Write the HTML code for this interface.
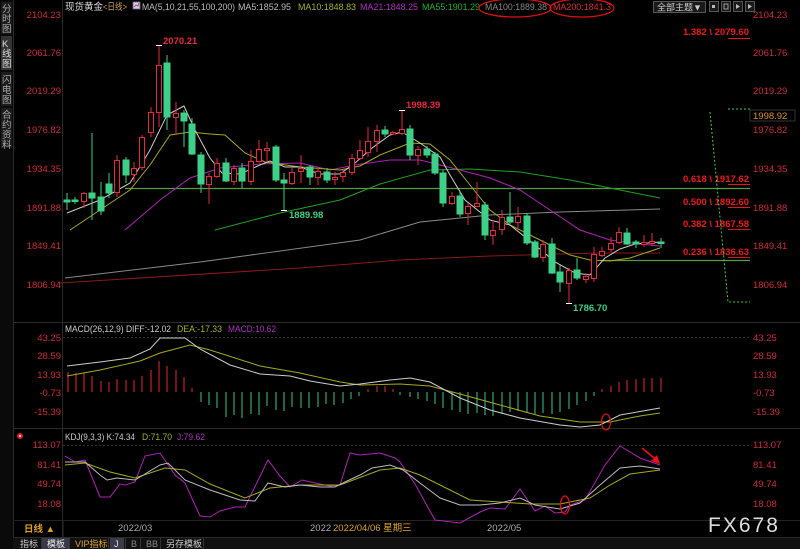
<!DOCTYPE html>
<html><head><meta charset="utf-8"><style>
html,body{margin:0;padding:0;background:#000;width:800px;height:549px;overflow:hidden}
svg{display:block}
text{font-family:"Liberation Sans","Noto Sans CJK SC",sans-serif;font-size:9.5px}
</style></head><body>
<svg width="800" height="549" viewBox="0 0 800 549" xmlns="http://www.w3.org/2000/svg">
<rect width="800" height="549" fill="#000"/>
<!-- sidebar -->
<rect x="0" y="0" width="13" height="549" fill="#0a0a0a"/>
<rect x="1" y="2" width="11" height="32" fill="#1c1c1c"/>
<rect x="1" y="36" width="11" height="34" fill="#333"/>
<rect x="1" y="72" width="11" height="34" fill="#1c1c1c"/>
<rect x="1" y="108" width="11" height="40" fill="#1c1c1c"/>
<g fill="#aaa">
<text x="2" y="12">分</text><text x="2" y="22">时</text><text x="2" y="32">图</text>
<text x="2" y="47" fill="#ddd">K</text><text x="2" y="57" fill="#ddd">线</text><text x="2" y="67" fill="#ddd">图</text>
<text x="2" y="83">闪</text><text x="2" y="93">电</text><text x="2" y="103">图</text>
<text x="2" y="118">合</text><text x="2" y="128">约</text><text x="2" y="138">资</text><text x="2" y="148">料</text>
</g>
<line x1="13.5" y1="0" x2="13.5" y2="549" stroke="#2a2a2a"/>
<line x1="62.5" y1="0" x2="62.5" y2="538" stroke="#2a2a2a"/>
<line x1="13" y1="322.5" x2="800" y2="322.5" stroke="#2a2a2a"/>
<line x1="13" y1="428.5" x2="800" y2="428.5" stroke="#2a2a2a"/>
<line x1="13" y1="520.5" x2="800" y2="520.5" stroke="#222"/>
<line x1="13" y1="537.5" x2="800" y2="537.5" stroke="#2a2a2a"/>
<line x1="63" y1="337.5" x2="750" y2="337.5" stroke="#333" stroke-dasharray="2,2"/>
<line x1="63" y1="445.5" x2="750" y2="445.5" stroke="#333" stroke-dasharray="2,2"/>

<!-- header -->
<text x="65" y="10" fill="#ddd" textLength="38" lengthAdjust="spacingAndGlyphs">现货黄金</text><text x="103" y="10" fill="#d0a050" textLength="24" lengthAdjust="spacingAndGlyphs">&lt;日线&gt;</text>
<rect x="133" y="2" width="7" height="7" fill="#ccd" stroke="#66a" stroke-width="0.8"/><polyline points="134,7 136,5 138,6 139,3" fill="none" stroke="#c33" stroke-width="0.8"/>
<text x="142" y="10" fill="#bbb" textLength="93" lengthAdjust="spacingAndGlyphs">MA(5,10,21,55,100,200)</text>
<text x="238" y="10" fill="#bbb" textLength="53" lengthAdjust="spacingAndGlyphs">MA5:1852.95</text>
<text x="298" y="10" fill="#a8b020" textLength="58" lengthAdjust="spacingAndGlyphs">MA10:1848.83</text>
<text x="360" y="10" fill="#b030c0" textLength="58" lengthAdjust="spacingAndGlyphs">MA21:1848.25</text>
<text x="422" y="10" fill="#20b030" textLength="58" lengthAdjust="spacingAndGlyphs">MA55:1901.29</text>
<text x="485" y="10" fill="#888" textLength="62" lengthAdjust="spacingAndGlyphs">MA100:1889.38</text>
<text x="553" y="10" fill="#d83030" textLength="58" lengthAdjust="spacingAndGlyphs">MA200:1841.3</text>
<ellipse cx="515" cy="8" rx="36" ry="9" fill="none" stroke="#e01010" stroke-width="1.2"/>
<ellipse cx="582" cy="8" rx="32" ry="9" fill="none" stroke="#e01010" stroke-width="1.2"/>
<rect x="653.5" y="1.5" width="52" height="11" fill="#1a1a1a" stroke="#555"/>
<text x="657" y="10.5" fill="#ccc" style="font-size:9px">全部主题▼</text>
<rect x="709.5" y="1.5" width="9" height="10" fill="#1a1a1a" stroke="#555"/>
<rect x="721.5" y="1.5" width="9" height="10" fill="#1a1a1a" stroke="#555"/>
<rect x="733.5" y="1.5" width="9" height="10" fill="#1a1a1a" stroke="#555"/>
<rect x="745.5" y="1.5" width="9" height="10" fill="#1a1a1a" stroke="#555"/>
<g fill="#bbb"><rect x="712" y="5" width="3" height="3"/><rect x="724" y="4" width="4" height="5" fill="none" stroke="#bbb" stroke-width="0.8"/><polygon points="736,4 740,6.5 736,9"/><polygon points="748,4 752,6.5 748,9"/></g>

<g fill="#d02a3a" text-anchor="end">
<text x="61" y="18">2104.23</text><text x="61" y="56">2061.76</text><text x="61" y="94">2019.29</text><text x="61" y="133">1976.82</text>
<text x="61" y="172">1934.35</text><text x="61" y="211">1891.88</text><text x="61" y="249">1849.41</text><text x="61" y="288">1806.94</text>
</g>
<g fill="#d02a3a">
<text x="753" y="18">2104.23</text><text x="753" y="56">2061.76</text><text x="753" y="94">2019.29</text><text x="753" y="133">1976.82</text>
<text x="753" y="172">1934.35</text><text x="753" y="211">1891.88</text><text x="753" y="249">1849.41</text><text x="753" y="288">1806.94</text>
</g>
<rect x="750" y="110" width="45" height="11" fill="#000" stroke="#333"/>
<text x="753" y="119" fill="#e09020">1998.92</text>

<g fill="#f01818" text-anchor="end">
<text x="749" y="35" style="font-weight:bold">1.382 \ 2079.60</text>
<text x="749" y="182" style="font-weight:bold">0.618 \ 1917.62</text>
<text x="749" y="205" style="font-weight:bold">0.500 \ 1892.60</text>
<text x="749" y="227" style="font-weight:bold">0.382 \ 1867.58</text>
<text x="749" y="255" style="font-weight:bold">0.236 \ 1836.63</text>
</g>
<g stroke="#e01818"><line x1="728" y1="38.5" x2="750" y2="38.5"/><line x1="728" y1="184.5" x2="750" y2="184.5"/><line x1="728" y1="207.5" x2="750" y2="207.5"/><line x1="728" y1="229.5" x2="750" y2="229.5"/><line x1="728" y1="257.5" x2="750" y2="257.5"/></g>
<line x1="125" y1="188.5" x2="750" y2="188.5" stroke="#5a9a40" stroke-width="1.2"/>
<line x1="600" y1="260.5" x2="750" y2="260.5" stroke="#5a9a40" stroke-width="1.2"/>
<polyline points="728,109 750,109" stroke="#40d040" stroke-dasharray="2,2" fill="none"/>
<polyline points="710,112 728,302 750,302" stroke="#40d040" stroke-dasharray="2,2" fill="none"/>

<g fill="none" stroke-width="1">
<polyline stroke="#8a1818" points="60,283 300,268 400,260 490,256 560,254 600,253 660,253"/>
<polyline stroke="#888" points="65,278 200,262 360,240 420,222 490,215 560,212 660,209"/>
<polyline stroke="#20a020" points="215,230 280,213 340,200 380,184 430,170 470,169 520,172 570,180 620,190 660,198"/>
<polyline stroke="#b020b8" points="125,230 160,200 190,178 220,168 260,164 300,163 330,170 355,165 390,160 420,160 460,170 490,178 520,190 550,210 580,230 610,240 640,244 660,246"/>
<polyline stroke="#a8a818" points="70,230 100,210 130,190 150,165 170,135 190,132 210,134 225,135 245,153 265,162 300,167 340,170 360,166 380,155 410,143 430,144 450,160 470,185 490,210 510,225 540,240 570,255 590,260 610,261 630,258 660,248"/>
<polyline stroke="#ccc" points="67,213 100,200 130,183 150,150 167,115 184,106 195,130 210,158 222,173 240,174 260,165 270,161 285,167 300,167 320,174 340,174 355,163 372,148 390,135 402,132 420,143 440,157 450,175 465,200 490,220 510,225 535,245 555,262 575,273 590,275 605,258 620,249 635,244 660,242"/>
</g>

<g stroke-width="1">
<g stroke="#3ecf88" fill="#3ecf88">
<line x1="67" y1="193" x2="67" y2="210"/><rect x="64" y="200" width="6" height="2"/>
<line x1="75" y1="197" x2="75" y2="204"/><rect x="72" y="200" width="6" height="1.5"/>
<line x1="92" y1="133" x2="92" y2="220"/><rect x="89" y="193" width="6" height="5"/>
<line x1="101" y1="182" x2="101" y2="215"/><rect x="98" y="197" width="6" height="14"/>
<line x1="109" y1="173" x2="109" y2="198"/><rect x="106" y="184" width="6" height="9"/>
<line x1="126" y1="157" x2="126" y2="183"/><rect x="123" y="160" width="6" height="15"/>
<line x1="167" y1="55" x2="167" y2="130"/><rect x="164" y="63" width="6" height="54"/>
<line x1="184" y1="110" x2="184" y2="147"/><rect x="181" y="113" width="6" height="8"/>
<line x1="192" y1="118" x2="192" y2="155"/><rect x="189" y="124" width="6" height="30"/>
<line x1="201" y1="152" x2="201" y2="193"/><rect x="198" y="155" width="6" height="29"/>
<line x1="226" y1="158" x2="226" y2="182"/><rect x="223" y="163" width="6" height="18"/>
<line x1="242" y1="163" x2="242" y2="188"/><rect x="239" y="168" width="6" height="13"/>
<line x1="276" y1="145" x2="276" y2="182"/><rect x="273" y="147" width="6" height="33"/>
<line x1="284" y1="173" x2="284" y2="210"/><rect x="281" y="180" width="6" height="3"/>
<line x1="310" y1="165" x2="310" y2="185"/><rect x="307" y="167" width="6" height="10"/>
<line x1="327" y1="168" x2="327" y2="183"/><rect x="324" y="172" width="6" height="8"/>
<line x1="385" y1="126" x2="385" y2="137"/><rect x="382" y="130" width="6" height="4"/>
<line x1="410" y1="125" x2="410" y2="160"/><rect x="407" y="129" width="6" height="26"/>
<line x1="427" y1="146" x2="427" y2="158"/><rect x="424" y="149" width="6" height="6"/>
<line x1="435" y1="152" x2="435" y2="175"/><rect x="432" y="154" width="6" height="19"/>
<line x1="443" y1="170" x2="443" y2="207"/><rect x="440" y="173" width="6" height="30"/>
<line x1="460" y1="192" x2="460" y2="217"/><rect x="457" y="196" width="6" height="18"/>
<line x1="485" y1="202" x2="485" y2="240"/><rect x="482" y="205" width="6" height="30"/>
<line x1="510" y1="192" x2="510" y2="224"/><rect x="507" y="217" width="6" height="5"/>
<line x1="527" y1="213" x2="527" y2="245"/><rect x="524" y="216" width="6" height="27"/>
<line x1="535" y1="240" x2="535" y2="258"/><rect x="532" y="242" width="6" height="15"/>
<line x1="552" y1="238" x2="552" y2="274"/><rect x="549" y="244" width="6" height="29"/>
<line x1="560" y1="265" x2="560" y2="292"/><rect x="557" y="272" width="6" height="10"/>
<line x1="577" y1="258" x2="577" y2="280"/><rect x="574" y="270" width="6" height="8"/>
<line x1="627" y1="228" x2="627" y2="245"/><rect x="624" y="233" width="6" height="11"/>
<line x1="636" y1="240" x2="636" y2="248"/><rect x="633" y="242" width="6" height="2"/>
<line x1="661" y1="238" x2="661" y2="248"/><rect x="658" y="242" width="6" height="1.5"/>
</g>
<g stroke="#e8283c" fill="#000">
<line x1="84" y1="192" x2="84" y2="208"/><rect x="81.5" y="193.5" width="5" height="8"/>
<line x1="117" y1="155" x2="117" y2="197"/><rect x="114.5" y="160.5" width="5" height="32"/>
<line x1="134" y1="162" x2="134" y2="182"/><rect x="131.5" y="168.5" width="5" height="6"/>
<line x1="142" y1="135" x2="142" y2="170"/><rect x="139.5" y="137.5" width="5" height="30"/>
<line x1="151" y1="107" x2="151" y2="137"/><rect x="148.5" y="112.5" width="5" height="20"/>
<line x1="159" y1="45" x2="159" y2="127"/><rect x="156.5" y="65.5" width="5" height="47"/>
<line x1="176" y1="102" x2="176" y2="135"/><rect x="173.5" y="113.5" width="5" height="4"/>
<line x1="209" y1="173" x2="209" y2="204"/><rect x="206.5" y="176.5" width="5" height="8"/>
<line x1="217" y1="158" x2="217" y2="178"/><rect x="214.5" y="163.5" width="5" height="13"/>
<line x1="234" y1="165" x2="234" y2="185"/><rect x="231.5" y="168.5" width="5" height="13"/>
<line x1="251" y1="150" x2="251" y2="185"/><rect x="248.5" y="161.5" width="5" height="20"/>
<line x1="259" y1="140" x2="259" y2="163"/><rect x="256.5" y="149.5" width="5" height="12"/>
<line x1="267" y1="142" x2="267" y2="162"/><rect x="264.5" y="148.5" width="5" height="2"/>
<line x1="292" y1="168" x2="292" y2="185"/><rect x="289.5" y="172.5" width="5" height="11"/>
<line x1="301" y1="155" x2="301" y2="183"/><rect x="298.5" y="168.5" width="5" height="3"/>
<line x1="318" y1="167" x2="318" y2="185"/><rect x="315.5" y="171.5" width="5" height="6"/>
<line x1="335" y1="172" x2="335" y2="185"/><rect x="332.5" y="177.5" width="5" height="2"/>
<line x1="343" y1="170" x2="343" y2="182"/><rect x="340.5" y="172.5" width="5" height="4"/>
<line x1="352" y1="154" x2="352" y2="175"/><rect x="349.5" y="158.5" width="5" height="14"/>
<line x1="360" y1="140" x2="360" y2="160"/><rect x="357.5" y="150.5" width="5" height="8"/>
<line x1="368" y1="127" x2="368" y2="157"/><rect x="365.5" y="141.5" width="5" height="11"/>
<line x1="377" y1="125" x2="377" y2="152"/><rect x="374.5" y="130.5" width="5" height="11"/>
<line x1="393" y1="131" x2="393" y2="135"/><rect x="390.5" y="132.5" width="5" height="1.5"/>
<line x1="402" y1="110" x2="402" y2="135"/><rect x="399.5" y="129.5" width="5" height="4"/>
<line x1="418" y1="146" x2="418" y2="165"/><rect x="415.5" y="149.5" width="5" height="6"/>
<line x1="452" y1="192" x2="452" y2="205"/><rect x="449.5" y="196.5" width="5" height="7"/>
<line x1="468" y1="203" x2="468" y2="225"/><rect x="465.5" y="206.5" width="5" height="7"/>
<line x1="477" y1="182" x2="477" y2="207"/><rect x="474.5" y="203.5" width="5" height="3"/>
<line x1="493" y1="220" x2="493" y2="245"/><rect x="490.5" y="230.5" width="5" height="5"/>
<line x1="502" y1="210" x2="502" y2="235"/><rect x="499.5" y="217.5" width="5" height="12"/>
<line x1="518" y1="207" x2="518" y2="230"/><rect x="515.5" y="216.5" width="5" height="6"/>
<line x1="543" y1="240" x2="543" y2="262"/><rect x="540.5" y="244.5" width="5" height="13"/>
<line x1="569" y1="268" x2="569" y2="303"/><rect x="566.5" y="270.5" width="5" height="13"/>
<line x1="586" y1="273" x2="586" y2="283"/><rect x="583.5" y="276.5" width="5" height="3"/>
<line x1="594" y1="247" x2="594" y2="282"/><rect x="591.5" y="254.5" width="5" height="24"/>
<line x1="602" y1="247" x2="602" y2="257"/><rect x="599.5" y="251.5" width="5" height="4"/>
<line x1="611" y1="237" x2="611" y2="252"/><rect x="608.5" y="243.5" width="5" height="6"/>
<line x1="619" y1="227" x2="619" y2="244"/><rect x="616.5" y="232.5" width="5" height="10"/>
<line x1="644" y1="235" x2="644" y2="247"/><rect x="641.5" y="242.5" width="5" height="2"/>
<line x1="652" y1="233" x2="652" y2="246"/><rect x="649.5" y="241.5" width="5" height="2"/>
</g>
</g>
<g fill="#fff" stroke="#fff"><line x1="156" y1="45.5" x2="162" y2="45.5"/><line x1="399" y1="110.5" x2="405" y2="110.5"/><line x1="281" y1="210.5" x2="287" y2="210.5"/><line x1="566" y1="303.5" x2="572" y2="303.5"/></g>
<text x="163" y="44" fill="#e8283c" style="font-weight:bold">2070.21</text>
<text x="406" y="108" fill="#e8283c" style="font-weight:bold">1998.39</text>
<text x="289" y="218" fill="#3ecf88" style="font-weight:bold">1889.98</text>
<text x="573" y="311" fill="#3ecf88" style="font-weight:bold">1786.70</text>

<!-- MACD -->
<text x="65" y="332" fill="#ccc" textLength="106" lengthAdjust="spacingAndGlyphs">MACD(26,12,9) DIFF:-12.02</text>
<text x="177" y="332" fill="#a8b020" textLength="45" lengthAdjust="spacingAndGlyphs">DEA:-17.33</text>
<text x="228" y="332" fill="#b030c0" textLength="48" lengthAdjust="spacingAndGlyphs">MACD:10.62</text>
<g fill="#d02a3a" text-anchor="end">
<text x="61" y="341">43.25</text><text x="61" y="359">28.59</text><text x="61" y="378">13.93</text><text x="61" y="396">-0.73</text><text x="61" y="415">-15.39</text>
</g>
<g fill="#d02a3a">
<text x="753" y="341">43.25</text><text x="753" y="359">28.59</text><text x="753" y="378">13.93</text><text x="753" y="396">-0.73</text><text x="753" y="415">-15.39</text>
</g>
<g stroke="#c02030" stroke-width="1.2">
<line x1="68" y1="392" x2="68" y2="372"/><line x1="76" y1="392" x2="76" y2="373"/><line x1="84" y1="392" x2="84" y2="373"/><line x1="92" y1="392" x2="92" y2="376"/><line x1="101" y1="392" x2="101" y2="381"/><line x1="109" y1="392" x2="109" y2="382"/><line x1="117" y1="392" x2="117" y2="379"/><line x1="126" y1="392" x2="126" y2="380"/><line x1="134" y1="392" x2="134" y2="380"/><line x1="142" y1="392" x2="142" y2="376"/><line x1="151" y1="392" x2="151" y2="370"/><line x1="159" y1="392" x2="159" y2="361"/><line x1="167" y1="392" x2="167" y2="366"/><line x1="176" y1="392" x2="176" y2="370"/><line x1="184" y1="392" x2="184" y2="377"/><line x1="192" y1="392" x2="192" y2="388"/>
<line x1="602" y1="392" x2="602" y2="389"/><line x1="611" y1="392" x2="611" y2="386"/><line x1="619" y1="392" x2="619" y2="382"/><line x1="627" y1="392" x2="627" y2="380"/><line x1="636" y1="392" x2="636" y2="379"/><line x1="644" y1="392" x2="644" y2="378"/><line x1="652" y1="392" x2="652" y2="378"/><line x1="661" y1="392" x2="661" y2="378"/>
</g>
<g stroke="#2fa870" stroke-width="1.2">
<line x1="201" y1="392" x2="201" y2="402"/><line x1="209" y1="392" x2="209" y2="405"/><line x1="217" y1="392" x2="217" y2="408"/><line x1="226" y1="392" x2="226" y2="417"/><line x1="234" y1="392" x2="234" y2="415"/><line x1="242" y1="392" x2="242" y2="418"/><line x1="251" y1="392" x2="251" y2="414"/><line x1="259" y1="392" x2="259" y2="415"/><line x1="267" y1="392" x2="267" y2="406"/><line x1="276" y1="392" x2="276" y2="410"/><line x1="284" y1="392" x2="284" y2="411"/><line x1="292" y1="392" x2="292" y2="407"/><line x1="301" y1="392" x2="301" y2="408"/><line x1="309" y1="392" x2="309" y2="408"/><line x1="318" y1="392" x2="318" y2="407"/><line x1="326" y1="392" x2="326" y2="404"/><line x1="334" y1="392" x2="334" y2="405"/><line x1="343" y1="392" x2="343" y2="403"/><line x1="351" y1="392" x2="351" y2="399"/><line x1="359" y1="392" x2="359" y2="396"/>
<line x1="400" y1="392" x2="400" y2="395"/><line x1="410" y1="392" x2="410" y2="397"/><line x1="418" y1="392" x2="418" y2="399"/><line x1="427" y1="392" x2="427" y2="401"/><line x1="435" y1="392" x2="435" y2="404"/><line x1="443" y1="392" x2="443" y2="408"/><line x1="452" y1="392" x2="452" y2="410"/><line x1="460" y1="392" x2="460" y2="412"/><line x1="468" y1="392" x2="468" y2="414"/><line x1="477" y1="392" x2="477" y2="413"/><line x1="485" y1="392" x2="485" y2="415"/><line x1="493" y1="392" x2="493" y2="416"/><line x1="502" y1="392" x2="502" y2="414"/><line x1="510" y1="392" x2="510" y2="412"/><line x1="518" y1="392" x2="518" y2="411"/><line x1="527" y1="392" x2="527" y2="413"/><line x1="535" y1="392" x2="535" y2="414"/><line x1="543" y1="392" x2="543" y2="413"/><line x1="552" y1="392" x2="552" y2="414"/><line x1="560" y1="392" x2="560" y2="412"/><line x1="569" y1="392" x2="569" y2="409"/><line x1="577" y1="392" x2="577" y2="405"/><line x1="586" y1="392" x2="586" y2="401"/><line x1="594" y1="392" x2="594" y2="396"/>
</g>
<g stroke="#c02030" stroke-width="1.2"><line x1="368" y1="392" x2="368" y2="389"/><line x1="377" y1="392" x2="377" y2="386"/><line x1="385" y1="392" x2="385" y2="386"/><line x1="393" y1="392" x2="393" y2="389"/></g>
<polyline fill="none" stroke="#a8a818" points="67,376 100,370 140,361 160,353 190,345 210,350 260,366 300,373 340,382 360,385 400,384 430,386 460,394 500,405 540,416 580,422 610,422 640,416 660,413"/>
<polyline fill="none" stroke="#ccc" points="67,366 100,362 130,358 150,349 160,338 185,338 200,349 230,365 260,374 290,376 310,381 340,386 360,384 390,380 410,378 430,382 460,398 490,410 520,418 560,425 580,427 600,425 620,415 660,408"/>
<ellipse cx="606" cy="422" rx="4.5" ry="8" fill="none" stroke="#e01010" stroke-width="1.2"/>

<!-- KDJ -->
<circle cx="20" cy="436" r="3" fill="#e02020"/><circle cx="20" cy="436" r="1" fill="#fff"/>
<text x="65" y="440" fill="#ccc" textLength="70" lengthAdjust="spacingAndGlyphs">KDJ(9,3,3) K:74.34</text>
<text x="142" y="440" fill="#a8b020" textLength="30" lengthAdjust="spacingAndGlyphs">D:71.70</text>
<text x="177" y="440" fill="#b030c0" textLength="28" lengthAdjust="spacingAndGlyphs">J:79.62</text>
<g fill="#d02a3a" text-anchor="end">
<text x="61" y="448">113.07</text><text x="61" y="468">81.41</text><text x="61" y="487">49.74</text><text x="61" y="507">18.08</text>
</g>
<g fill="#d02a3a">
<text x="753" y="448">113.07</text><text x="753" y="468">81.41</text><text x="753" y="487">49.74</text><text x="753" y="507">18.08</text>
</g>
<polyline fill="none" stroke="#b020b8" points="65,456 75,462 85,460 100,497 110,497 120,484 125,485 135,482 145,456 160,453 175,475 185,483 200,516 210,517 220,511 235,507 245,507 268,460 280,476 290,487 302,480 315,483 330,486 340,485 350,453 360,455 380,453 395,458 400,462 415,484 435,520 460,523 480,512 490,508 505,509 520,489 535,511 545,506 555,513 565,512 570,505 585,500 605,465 620,446 640,458 660,465"/>
<polyline fill="none" stroke="#a8a818" points="65,465 85,463 110,472 135,478 165,468 185,470 210,484 245,498 270,488 300,485 340,485 380,470 400,468 420,475 450,490 470,500 500,502 530,504 560,504 590,498 610,485 630,474 660,470"/>
<polyline fill="none" stroke="#bbb" points="65,462 85,462 100,475 107,480 117,478 135,480 160,465 168,463 185,480 210,490 240,500 255,501 268,483 285,487 300,485 320,487 335,487 345,482 360,475 372,468 390,465 403,470 420,483 440,498 460,505 480,505 500,503 520,498 535,505 560,509 580,503 600,485 620,468 640,466 660,469"/>
<ellipse cx="565" cy="505" rx="4.5" ry="9" fill="none" stroke="#e01010" stroke-width="1.3"/>
<line x1="642" y1="448" x2="654" y2="458" stroke="#f01010" stroke-width="1.5"/>
<polygon points="651,461 660,464 657,455" fill="#f01010"/>

<text x="24" y="532" fill="#e0a020" style="font-weight:bold">日线 ▲</text>
<line x1="63" y1="521" x2="63" y2="537" stroke="#2a2a2a"/>
<text x="118" y="531" fill="#aaa">2022/03</text>
<text x="310" y="531" fill="#aaa">2022</text><text x="333" y="531" fill="#e0a020">2022/04/06 星期三</text>
<text x="487" y="531" fill="#aaa">2022/05</text>
<text x="708" y="532" fill="#ddd" style="font-size:21px;letter-spacing:2px">FX678</text>

<rect x="13" y="538" width="787" height="11" fill="#111"/>
<rect x="42" y="538" width="27" height="11" fill="#3a3a48"/>
<rect x="110" y="538" width="14" height="11" fill="#3a3a48"/>
<text x="20" y="547" fill="#ccc" style="font-size:9px">指标</text>
<text x="47" y="547" fill="#eee" style="font-size:9px">模板</text>
<text x="75" y="547" fill="#e0a020" style="font-size:9px">VIP指标</text>
<text x="114" y="547" fill="#ddd" style="font-size:9px">J</text>
<text x="131" y="547" fill="#888" style="font-size:9px">B</text>
<text x="146" y="547" fill="#888" style="font-size:9px">BB</text>
<text x="166" y="547" fill="#ccc" style="font-size:9px">另存模板</text>
<g stroke="#333"><line x1="41.5" y1="538" x2="41.5" y2="549"/><line x1="69.5" y1="538" x2="69.5" y2="549"/><line x1="108.5" y1="538" x2="108.5" y2="549"/><line x1="125.5" y1="538" x2="125.5" y2="549"/><line x1="140.5" y1="538" x2="140.5" y2="549"/><line x1="160.5" y1="538" x2="160.5" y2="549"/><line x1="203.5" y1="538" x2="203.5" y2="549"/></g>
</svg>
</body></html>
